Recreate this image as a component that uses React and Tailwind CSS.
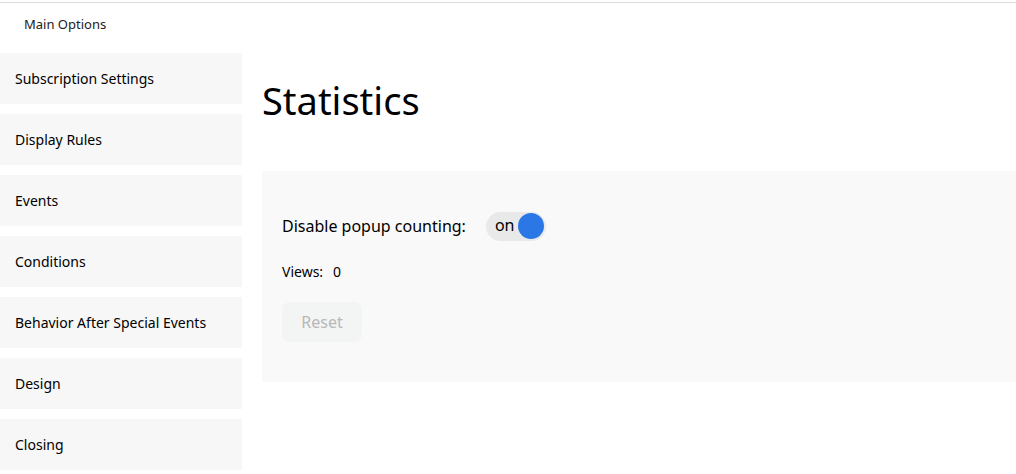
import React, { useState } from 'react';

const sections = [
  'Subscription Settings',
  'Display Rules',
  'Events',
  'Conditions',
  'Behavior After Special Events',
  'Design',
  'Closing',
];

const Toggle = ({ checked, onChange }) => (
  <button
    onClick={() => onChange(!checked)}
    className="flex items-center justify-between w-[60px] h-[29px] rounded-full bg-[#e9e9e9] pl-[9px] pr-[2px]"
  >
    <span className="text-[16px] text-black leading-none pb-[2px]">{checked ? 'on' : 'off'}</span>
    <span className="w-[26px] h-[26px] rounded-full bg-[#2b77e6]" />
  </button>
);

const App = () => {
  const [disabled, setDisabled] = useState(true);

  return (
    <div className="min-h-screen bg-white pt-[2px] text-black" style={{ fontFamily: "'Segoe UI', 'Noto Sans', sans-serif" }}>
      <div className="border-t border-[#dcdcdc]">
        <div className="h-[50px] flex items-center pl-[24px] pb-[6px] text-[13px] text-[#222]">Main Options</div>
        <div className="flex">
          <nav className="w-[242px] flex flex-col gap-[10px] shrink-0">
            {sections.map((name) => (
              <div key={name} className="h-[51px] flex items-center px-[15px] bg-[#f7f7f7] text-[14px]">
                {name}
              </div>
            ))}
          </nav>
          <main className="flex-1 pl-[20px]">
            <h1 className="h-[118px] flex items-center text-[38px] pb-[24px]">Statistics</h1>
            <div className="bg-[#f9f9f9] pt-[40px] pb-[40px] pl-[20px]">
              <div className="flex items-center gap-[20px] h-[30px]">
                <span className="text-[16px]">Disable popup counting:</span>
                <Toggle checked={disabled} onChange={setDisabled} />
              </div>
              <div className="mt-[20px] text-[14px] flex gap-[10px]">
                <span>Views:</span>
                <span>0</span>
              </div>
              <button className="mt-[20px] w-[80px] h-[40px] rounded-[8px] bg-[#f3f4f4] text-[16px] text-[#b8b8b8]">
                Reset
              </button>
            </div>
          </main>
        </div>
      </div>
    </div>
  );
};

export default App;
